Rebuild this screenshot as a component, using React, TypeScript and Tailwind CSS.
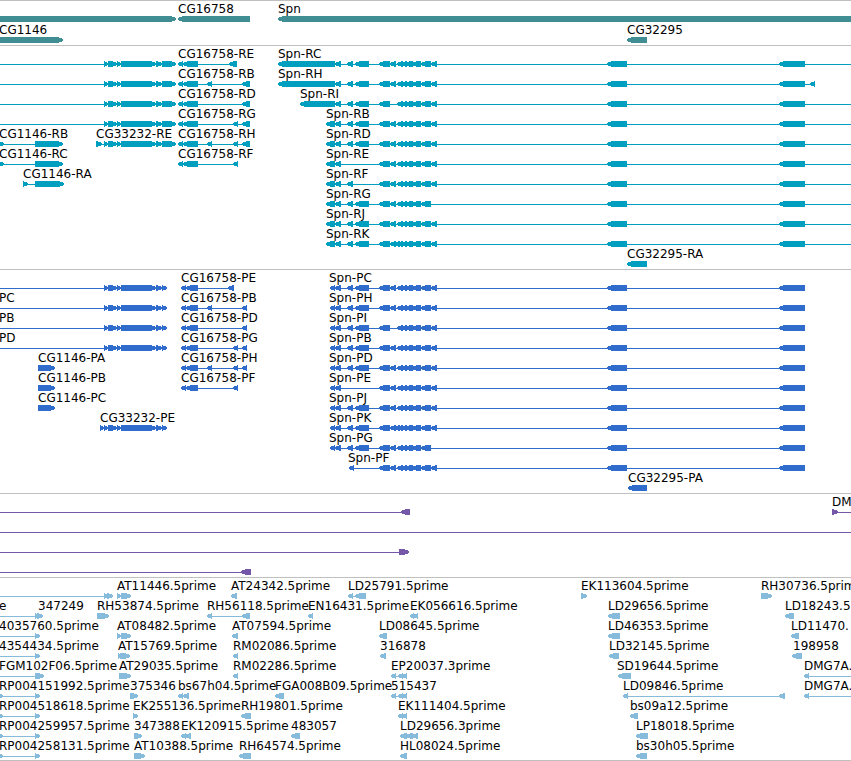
type Span = [number, number];
type Feature = {
  x?: number;
  label?: string;
  dir?: "l" | "r";
  exons?: Span[];
  line?: Span;
};
type Row = Feature[];

const FAR = 4000;

// Feature pointing left / right; the intron line spans all exons unless given.
const l = (label: string, x: number, exons: Span[], line?: Span): Feature => ({ label, x, dir: "l", exons, line });
const r = (label: string, x: number, exons: Span[], line?: Span): Feature => ({ label, x, dir: "r", exons, line });

const genes: Row[] = [
  [r("", 0, [[-10, 176]]), l("CG16758", 178, [[178, 250]]), l("Spn", 278, [[278, FAR]])],
  [r("CG1146", -1, [[-10, 63]]), l("CG32295", 627, [[627, 647]])],
];

const rna33232: Span[] = [[104, 108], [108, 117], [117, 121], [121, 156], [156, 162], [162, 176]];
const rnaTail: Span[] = [[178, 183], [183, 198]];
const A: Span = [347, 353];
const B: Span = [355, 369];
const C: Span = [379, 390];
const D: Span = [390, 396];
const K: Span = [394, 400];
const body: Span[] = [[397, 403], [401, 407], [405, 413], [412, 421], [421, 431]];
const last: Span = [431, 437];
const far: Span[] = [[607, 627], [779, 805]];
const spnStart: Span[] = [[326, 335], [335, 341]];

const spnR = (label: string, x: number, exons: Span[]) => l(label, x, exons, [x, FAR]);
const openRna = r("", 0, rna33232, [-10, 176]);

const transcripts: Row[] = [
  [openRna, l("CG16758-RE", 178, [...rnaTail, [229, 237]]), spnR("Spn-RC", 278, [[278, 335], [335, 341], A, B, C, D, ...body, last, ...far])],
  [openRna, l("CG16758-RB", 178, [...rnaTail, [207, 212], [242, 250]]), l("Spn-RH", 278, [[278, 335], [335, 341], A, B, C, D, ...body, last, ...far, [810, 815]])],
  [openRna, l("CG16758-RD", 178, [...rnaTail, [242, 250]]), spnR("Spn-RI", 300, [[300, 335], [335, 341], A, B, C, ...body, last, ...far])],
  [openRna, l("CG16758-RG", 178, [...rnaTail, [233, 238], [242, 250]]), spnR("Spn-RB", 326, [...spnStart, A, B, C, D, ...body, last, ...far])],
  [
    r("CG1146-RB", -1, [[-6, 4], [35, 63]]),
    r("CG33232-RE", 96, [[96, 102], ...rna33232]),
    l("CG16758-RH", 178, [...rnaTail, [207, 212], [233, 238], [242, 250]]),
    spnR("Spn-RD", 326, [...spnStart, A, B, C, D, ...body, last, ...far]),
  ],
  [
    r("CG1146-RC", -1, [[-6, 4], [35, 63]]),
    l("CG16758-RF", 178, [...rnaTail, [233, 238]]),
    spnR("Spn-RE", 326, [...spnStart, C, D, ...body, last, ...far]),
  ],
  [r("CG1146-RA", 23, [[23, 28], [35, 64]]), spnR("Spn-RF", 326, [...spnStart, A, C, D, ...body, last, ...far])],
  [spnR("Spn-RG", 326, [...spnStart, A, B, C, D, ...body, ...far])],
  [spnR("Spn-RJ", 326, [...spnStart, A, B, C, D, ...body, last, ...far])],
  [spnR("Spn-RK", 326, [...spnStart, A, B, C, D, K, ...body, last, ...far])],
  [l("CG32295-RA", 627, [[627, 647]])],
];

const cds33232: Span[] = [[104, 108], [108, 117], [117, 121], [121, 156], [156, 162], [162, 167]];
const cdsTail: Span[] = [[181, 186], [186, 198]];
const cdsStart: Span[] = [[330, 335], [335, 341]];
const openCds = (label: string) => r(label, -1, cds33232, [-10, 167]);
const spnP = (label: string, exons: Span[]) => l(label, 329, [...cdsStart, ...exons, ...far]);

const proteins: Row[] = [
  [openCds(""), l("CG16758-PE", 181, [...cdsTail, [228, 234]]), spnP("Spn-PC", [A, B, C, D, ...body, last])],
  [openCds("PC"), l("CG16758-PB", 181, [...cdsTail, [207, 212], [242, 247]]), spnP("Spn-PH", [A, B, C, D, ...body, last])],
  [openCds("PB"), l("CG16758-PD", 181, [...cdsTail, [242, 247]]), spnP("Spn-PI", [A, B, C, ...body, last])],
  [openCds("PD"), l("CG16758-PG", 181, [...cdsTail, [233, 238], [242, 247]]), spnP("Spn-PB", [A, B, C, D, ...body, last])],
  [r("CG1146-PA", 38, [[38, 55]]), l("CG16758-PH", 181, [...cdsTail, [207, 212], [233, 238], [242, 247]]), spnP("Spn-PD", [A, B, C, D, ...body, last])],
  [r("CG1146-PB", 38, [[38, 55]]), l("CG16758-PF", 181, [...cdsTail, [233, 238]]), spnP("Spn-PE", [C, D, ...body, last])],
  [r("CG1146-PC", 38, [[38, 55]]), spnP("Spn-PJ", [A, B, C, D, ...body, last])],
  [r("CG33232-PE", 100, [[100, 104], ...cds33232]), spnP("Spn-PK", [A, B, C, D, K, ...body, last])],
  [spnP("Spn-PG", [A, B, C, D, ...body])],
  [l("Spn-PF", 348, [[349, 354], C, D, ...body, last, ...far])],
  [l("CG32295-PA", 628, [[628, 647]])],
];

const cdna: Row[] = [
  [l("", 0, [[401, 410]], [-10, 410]), r("DM", 832, [[832, 838]], [832, FAR])],
  [r("", 0, [], [-10, FAR])],
  [r("", 0, [[399, 409]], [-10, 409])],
  [l("", 0, [[241, 251]], [-10, 251])],
];

const rp = (label: string) => r(label, -1, [[-3, 3], [35, 40]]);

const ests: Row[] = [
  [
    r("", 0, [[104, 108], [107, 113]], [-10, 113]),
    r("AT11446.5prime", 117, [[117, 121], [121, 131]]),
    l("AT24342.5prime", 231, [[231, 237]]),
    l("LD25791.5prime", 348, [[348, 353], [355, 366]]),
    r("EK113604.5prime", 581, [[581, 587]]),
    r("RH30736.5prime", 761, [[761, 772]]),
  ],
  [
    r("e", -1, [[35, 39], [37, 43]], [-10, 43]),
    r("347249", 38, []),
    r("RH53874.5prime", 97, [[97, 109]]),
    l("RH56118.5prime", 207, [[207, 212], [242, 250]]),
    l("EN16431.5prime", 308, [[308, 313]]),
    l("EK056616.5prime", 410, [[410, 414], [413, 418]]),
    l("LD29656.5prime", 608, [[608, 620]]),
    l("LD18243.5", 785, [[785, 794]]),
  ],
  [
    r("4035760.5prime", -1, [[35, 40]], [-10, 40]),
    r("AT08482.5prime", 117, [[117, 121], [121, 131]]),
    l("AT07594.5prime", 232, [[232, 238]]),
    l("LD08645.5prime", 379, [[379, 387]]),
    l("LD46353.5prime", 608, [[608, 620]]),
    l("LD11470.", 791, [[791, 799]]),
  ],
  [
    r("4354434.5prime", -1, [[35, 40]], [-10, 40]),
    r("AT15769.5prime", 118, [[118, 121], [120, 130]]),
    l("RM02086.5prime", 233, [[233, 238]]),
    l("316878", 380, [[380, 386]]),
    l("LD32145.5prime", 609, [[609, 619]]),
    l("198958", 793, [[792, 802]]),
  ],
  [
    r("FGM102F06.5prime", -1, [[35, 44]], [-10, 44]),
    r("AT29035.5prime", 119, [[119, 131]]),
    l("RM02286.5prime", 233, [[233, 238]]),
    l("EP20037.3prime", 391, [[391, 396], [398, 403], [402, 407]]),
    l("SD19644.5prime", 617, [[618, 631]]),
    l("DMG7A.", 804, [[804, 809]], [804, FAR]),
  ],
  [
    rp("RP004151992.5prime"),
    r("375346", 130, [[130, 138]]),
    l("bs67h04.5prime", 178, [[178, 183], [183, 189]]),
    l("FGA008B09.5prime", 275, [[275, 284]]),
    l("515437", 391, [[391, 396], [398, 403], [402, 407]]),
    l("LD09846.5prime", 623, [[623, 628], [779, 785]]),
    l("DMG7A.", 804, [[804, 809]], [804, FAR]),
  ],
  [
    rp("RP004518618.5prime"),
    r("EK255136.5prime", 133, [[133, 138]]),
    l("RH19801.5prime", 241, [[241, 251]]),
    l("EK111404.5prime", 398, [[398, 403], [402, 407]]),
    l("bs09a12.5prime", 630, [[630, 638]]),
  ],
  [
    rp("RP004259957.5prime"),
    r("347388", 134, [[134, 142]]),
    l("EK120915.5prime", 181, [[181, 186], [185, 191]]),
    l("483057", 291, [[291, 300]]),
    l("LD29656.3prime", 400, [[400, 407], [406, 413], [412, 418]]),
    l("LP18018.5prime", 636, [[636, 648]]),
  ],
  [
    rp("RP004258131.5prime"),
    r("AT10388.5prime", 134, [[134, 145]]),
    l("RH64574.5prime", 239, [[239, 251]]),
    l("HL08024.5prime", 400, [[400, 407]]),
    l("bs30h05.5prime", 636, [[636, 647]]),
  ],
];

function arrow([a, b]: Span, dir: "l" | "r") {
  const head = Math.min(5, b - a);
  return dir === "l"
    ? `${a},2 ${a + head},0 ${b},0 ${b},6 ${a + head},6 ${a},4`
    : `${b},2 ${b - head},0 ${a},0 ${a},6 ${b - head},6 ${b},4`;
}

function Glyph({ feature }: { feature: Feature }) {
  const exons = feature.exons ?? [];
  const line: Span | undefined =
    feature.line ?? (exons.length > 1 ? [exons[0][0], exons[exons.length - 1][1]] : undefined);
  return (
    <g>
      {line && <rect x={line[0]} y={3} width={line[1] - line[0]} height={1} />}
      {exons.map((e, i) => (
        <polygon key={i} points={arrow(e, feature.dir ?? "l")} />
      ))}
    </g>
  );
}

function Track({ rows, color, gap, name }: { rows: Row[]; color: string; gap: string; name: string }) {
  return (
    <section aria-label={name} className={`flex flex-col border-t border-[#c0c0c0] pt-0.5 ${gap}`}>
      {rows.map((row, i) => (
        <div key={i} className="flex flex-col">
          <div className="relative z-10 h-[13px]">
            {row
              .filter((f) => f.label)
              .map((f) => (
                <span key={f.label! + f.x} className="absolute top-0 whitespace-nowrap" style={{ left: f.x }}>
                  {f.label}
                </span>
              ))}
          </div>
          <svg className={`block h-1.5 w-full ${color}`} shapeRendering="crispEdges" aria-hidden="true">
            {row.map((f, j) => (
              <Glyph key={j} feature={f} />
            ))}
          </svg>
        </div>
      ))}
    </section>
  );
}

export default function App() {
  return (
    <main className="w-full overflow-hidden border-b border-[#c0c0c0] bg-white font-['DejaVu_Sans',sans-serif] text-[12px] leading-[12px] text-black">
      <Track name="Genes" rows={genes} color="fill-[#408e94]" gap="gap-0.5 pb-0.5" />
      <Track name="Transcripts" rows={transcripts} color="fill-[#009fc0]" gap="gap-px pb-0.5" />
      <Track name="Proteins" rows={proteins} color="fill-[#306ccc]" gap="gap-px pb-0.5" />
      <Track name="cDNA" rows={cdna} color="fill-[#7558a8]" gap="gap-px pb-0.5" />
      <Track name="ESTs" rows={ests} color="fill-[#86bbdc]" gap="gap-px pb-px" />
    </main>
  );
}
